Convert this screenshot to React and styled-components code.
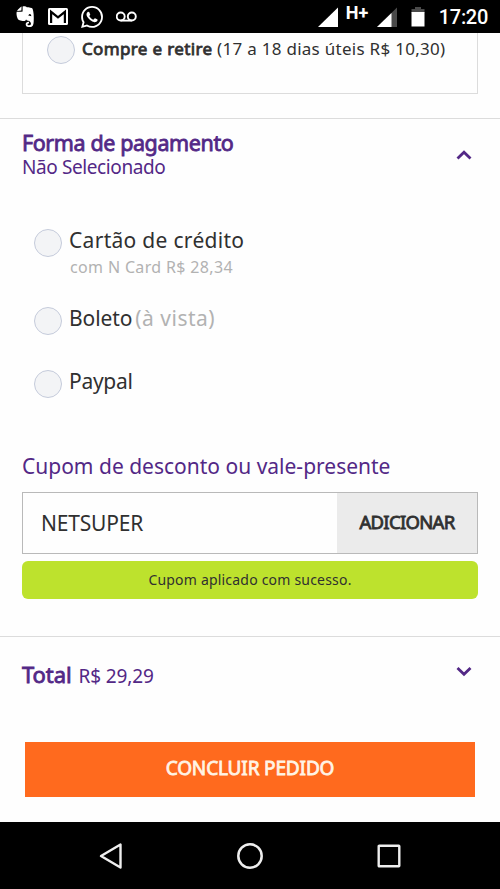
import React from "react";
import styled, { createGlobalStyle, css } from "styled-components";

const purple = "#532886";

const paymentMethods = [
  { name: "Cartão de crédito", spacing: 0.3, note: "com N Card R$ 28,34" },
  { name: "Boleto", spacing: -0.1, hint: "(à vista)" },
  { name: "Paypal", spacing: -0.3 },
];

const StatusBar = () => (
  <Status>
    <StatusGroup>
      <svg width="19" height="22" viewBox="0 0 19 22">
        <path
          fill="#fff"
          d="M5.6.6 5.4 4.6 1.2 4.9C1.7 3.9 4.5 1 5.6.6ZM6.6.5C8 0 9.8 0 10.8 1.3 13 1.4 16 1.7 16.6 2.8 17.7 6 18 11 17.7 15.5 17.500 18.500 17 21 14.200 21H12.500C10.400 21 9.700 19.700 9.700 18.300 9.700 16.400 11 15.600 13 15.700V17.400C11.900 17.300 11.500 17.700 11.600 18.400 11.700 19.100 12.300 19.200 13.200 19.200 14.700 19.200 15 18.500 14.900 17.300 14.700 15.300 12.900 14.800 11 14.400 10.500 14.200 10.200 13.900 10.100 13.200 9.500 15.200 8.200 15.200 6.500 14.900 3.400 14.500 2 14 1.300 11.700.6 9.700.3 7.500.7 5.800H5.500C6.300 5.800 6.600 5.400 6.600 4.600ZM12.500 10.100C13.300 9.600 14.400 9.700 15.300 10.300 15.200 8.800 14.600 8.100 13.800 8.100 13 8.100 12.600 8.900 12.500 10.100Z"
        />
      </svg>
      <svg width="20" height="17" viewBox="0 0 20 17">
        <rect width="20" height="17" rx="1.5" fill="#fff" />
        <path
          d="M3.1 15V3.8L10 9.3l6.9-5.5V15"
          fill="none"
          stroke="#000"
          strokeWidth="2.2"
        />
        <path d="M3.5 2h13L10 7Z" fill="#fff" />
      </svg>
      <svg width="22" height="22" viewBox="0 0 24 24">
        <path
          fill="#fff"
          d="M17.472 14.382c-.297-.149-1.758-.867-2.030-.967-.273-.099-.471-.148-.670.150-.197.297-.767.966-.940 1.164-.173.199-.347.223-.644.075-.297-.150-1.255-.463-2.390-1.475-.883-.788-1.480-1.761-1.653-2.059-.173-.297-.018-.458.130-.606.134-.133.298-.347.446-.520.149-.174.198-.298.298-.497.099-.198.050-.371-.025-.520-.075-.149-.669-1.612-.916-2.207-.242-.579-.487-.500-.669-.510-.173-.008-.371-.010-.570-.010-.198 0-.520.074-.792.372-.272.297-1.040 1.016-1.040 2.479 0 1.462 1.065 2.875 1.213 3.074.149.198 2.096 3.200 5.077 4.487.709.306 1.262.489 1.694.625.712.227 1.360.195 1.871.118.571-.085 1.758-.719 2.006-1.413.248-.694.248-1.289.173-1.413-.074-.124-.272-.198-.570-.347m-5.421 7.403h-.004a9.870 9.870 0 01-5.031-1.378l-.361-.214-3.741.982.998-3.648-.235-.374a9.860 9.860 0 01-1.510-5.260c.001-5.450 4.436-9.884 9.888-9.884 2.640 0 5.122 1.030 6.988 2.898a9.825 9.825 0 012.893 6.994c-.003 5.450-4.437 9.884-9.885 9.884m8.413-18.297A11.815 11.815 0 0012.050 0C5.495 0 .160 5.335.157 11.892c0 2.096.547 4.142 1.588 5.945L.057 24l6.305-1.654a11.882 11.882 0 005.683 1.448h.005c6.554 0 11.890-5.335 11.893-11.893a11.821 11.821 0 00-3.480-8.413z"
        />
      </svg>
      <svg width="22" height="12" viewBox="0 0 22 12">
        <g fill="none" stroke="#fff" strokeWidth="1.9">
          <circle cx="4.700" cy="5.500" r="4" />
          <circle cx="15.800" cy="5.500" r="4" />
          <path d="M4.700 9.600h11.100" />
        </g>
      </svg>
    </StatusGroup>
    <StatusGroup $right>
      <svg width="20" height="20" viewBox="0 0 20 20">
        <path d="M20 .5V20H0Z" fill="#fff" />
      </svg>
      <Network>H+</Network>
      <svg width="20" height="20" viewBox="0 0 20 20">
        <path d="M20 .5V20H0Z" fill="#4a4a4a" />
        <path d="M14.500 6v14H0Z" fill="#fff" />
      </svg>
      <Battery width="14" height="20" viewBox="0 0 14 20">
        <path d="M4 0h6v2h3.500v4H.5V2H4Z" fill="#4a4a4a" />
        <path d="M.5 5h13v14.500H.5Z" fill="#fff" />
      </Battery>
      <Clock>17:20</Clock>
    </StatusGroup>
  </Status>
);

const Chevron = ({ up }) => (
  <svg width="18" height="12" viewBox="0 0 18 12">
    <path
      d={up ? "M2.500 9.500 9 3.200 15.500 9.500" : "M2.500 3 9 9.300 15.500 3"}
      fill="none"
      stroke={purple}
      strokeWidth="2.8"
    />
  </svg>
);

const App = () => {
  return (
    <Screen>
      <GlobalStyle />
      <StatusBar />
      <Content>
        <Delivery>
          <Radio />
          <DeliveryText>
            <strong>Compre e retire</strong> <span>(17 a 18 dias úteis R$ 10,30)</span>
          </DeliveryText>
        </Delivery>
        <Payment>
          <PaymentHeader>
            <div>
              <Title>Forma de pagamento</Title>
              <Subtitle>Não Selecionado</Subtitle>
            </div>
            <Chevron up />
          </PaymentHeader>
          <Methods>
            {paymentMethods.map((method) => (
              <Method key={method.name}>
                <Radio />
                <div>
                  <MethodName>
                    <Label $spacing={method.spacing}>{method.name}</Label>
                    {method.hint && <Hint>{method.hint}</Hint>}
                  </MethodName>
                  {method.note && <Note>{method.note}</Note>}
                </div>
              </Method>
            ))}
          </Methods>
          <CouponTitle>Cupom de desconto ou vale-presente</CouponTitle>
          <Coupon>
            <CouponCode>NETSUPER</CouponCode>
            <AddButton>ADICIONAR</AddButton>
          </Coupon>
          <Success>Cupom aplicado com sucesso.</Success>
        </Payment>
        <Total>
          <TotalText>
            <strong>Total</strong>
            <span>R$ 29,29</span>
          </TotalText>
          <Chevron />
        </Total>
        <Submit>CONCLUIR PEDIDO</Submit>
      </Content>
      <NavBar>
        <svg width="24" height="28" viewBox="0 0 24 28">
          <path
            d="M21.500 2.500v23L2 14Z"
            fill="none"
            stroke="#eee"
            strokeWidth="2.4"
            strokeLinejoin="round"
          />
        </svg>
        <svg width="28" height="28" viewBox="0 0 28 28">
          <circle cx="14" cy="14" r="11.7" fill="none" stroke="#eee" strokeWidth="2.5" />
        </svg>
        <svg width="24" height="24" viewBox="0 0 24 24">
          <rect
            x="1.7"
            y="1.7"
            width="20.6"
            height="20.6"
            rx=".5"
            fill="none"
            stroke="#eee"
            strokeWidth="2.4"
          />
        </svg>
      </NavBar>
    </Screen>
  );
};

const GlobalStyle = createGlobalStyle`
  * {
    box-sizing: border-box;
  }
  body {
    margin: 0;
    background: #fff;
  }
  h2, h3, p {
    margin: 0;
    font-weight: 400;
  }
  svg {
    display: block;
    flex-shrink: 0;
  }
`;

// thickens the regular cut, so bold text keeps its narrow widths
const heavy = css`
  font-weight: 400;
  -webkit-text-stroke: 0.8px currentColor;
`;

const Screen = styled.div`
  display: flex;
  flex-direction: column;
  width: 500px;
  height: 889px;
  overflow: hidden;
  background: #fefefe;
  color: #303030;
  font-family: "Noto Sans", "Open Sans", sans-serif;
  white-space: nowrap;
`;

const Status = styled.header`
  display: flex;
  justify-content: space-between;
  height: 33px;
  flex-shrink: 0;
  padding: 0 12px 0 16px;
  background: #000;
  color: #fff;
  font-family: Roboto, sans-serif;
`;

const StatusGroup = styled.div`
  display: flex;
  align-items: ${({ $right }) => ($right ? "flex-start" : "center")};
  gap: ${({ $right }) => ($right ? "8px" : "13px")};
  padding-top: ${({ $right }) => ($right ? "7px" : "0")};
`;

const Network = styled.span`
  width: 23px;
  margin-top: -4px;
  font-size: 18px;
  font-weight: 700;
  line-height: 20px;
`;

const Battery = styled.svg`
  margin-left: 6px;
`;

const Clock = styled.span`
  margin-left: 6px;
  font-size: 20px;
  font-weight: 500;
  line-height: 21px;
  letter-spacing: -0.3px;
`;

const Content = styled.main`
  flex: 1;
`;

const Delivery = styled.section`
  display: flex;
  height: 61px;
  margin: 0 22px 24px;
  padding: 3px 0 0 24px;
  border: 1px solid #dcdcdc;
  border-width: 0 1px 1px;
`;

const Radio = styled.span`
  width: 28px;
  height: 28px;
  flex-shrink: 0;
  border: 1.5px solid #c5cbdb;
  border-radius: 50%;
  background: #f3f4f6;
`;

const DeliveryText = styled.p`
  margin: -1px 0 0 7px;
  font-size: 17px;
  line-height: 28px;
  letter-spacing: 0.28px;
  strong {
    ${heavy}
    letter-spacing: 0.35px;
  }
`;

const Payment = styled.section`
  height: 518px;
  padding: 12px 22px 0;
  border-top: 1px solid #dcdcdc;
`;

const PaymentHeader = styled.div`
  display: flex;
  align-items: center;
  justify-content: space-between;
  padding-right: 5px;
  color: ${purple};
`;

const Title = styled.h2`
  ${heavy}
  font-size: 21.5px;
  line-height: 24px;
  letter-spacing: -0.4px;
`;

const Subtitle = styled.p`
  font-size: 19px;
  line-height: 24px;
  letter-spacing: -0.4px;
`;

const Methods = styled.div`
  height: 275px;
  padding: 47px 0 0 12px;
`;

const Method = styled.div`
  display: flex;
  height: 63px;
  &:first-child {
    height: 78px;
  }
  ${Radio} {
    margin: 3px 7px 0 0;
  }
`;

const MethodName = styled.div`
  font-size: 21px;
  line-height: 28px;
`;

const Label = styled.span`
  letter-spacing: ${({ $spacing }) => $spacing}px;
`;

const Hint = styled.span`
  margin-left: 3px;
  color: #b2b2b2;
  letter-spacing: 0.5px;
`;

const Note = styled.p`
  padding: 1px 0 0 1px;
  color: #b2b2b2;
  font-size: 16px;
  line-height: 24px;
  letter-spacing: 0.35px;
`;

const CouponTitle = styled.h3`
  height: 38px;
  color: ${purple};
  font-size: 21px;
  line-height: 24px;
`;

const Coupon = styled.div`
  display: flex;
  height: 62px;
  border: 1px solid #b9b9b9;
`;

const CouponCode = styled.div`
  flex: 1;
  padding-left: 18px;
  font-size: 21px;
  line-height: 60px;
  letter-spacing: -0.2px;
`;

const AddButton = styled.button`
  width: 140px;
  padding: 0 0 4px;
  border: 0;
  background: #ebebeb;
  color: #303030;
  font: 400 18.5px "Noto Sans", sans-serif;
  letter-spacing: -0.7px;
  ${heavy}
`;

const Success = styled.p`
  height: 38px;
  margin-top: 7px;
  border-radius: 6px;
  background: #bde22d;
  font-size: 14px;
  line-height: 37px;
  letter-spacing: 0.2px;
  text-align: center;
`;

const Total = styled.section`
  display: flex;
  justify-content: space-between;
  height: 106px;
  padding: 28px 27px 0 22px;
  border-top: 1px solid #dcdcdc;
  color: ${purple};
`;

const TotalText = styled.p`
  margin-top: -2px;
  font-size: 19px;
  line-height: 22px;
  letter-spacing: -0.1px;
  strong {
    ${heavy}
    margin-right: 7px;
    font-size: 22px;
  }
`;

const Submit = styled.button`
  display: block;
  width: 450px;
  height: 55px;
  margin: 0 auto;
  padding: 0 0 4px;
  border: 0;
  background: #ff6a1e;
  color: #fff4e6;
  font: 400 19px "Noto Sans", sans-serif;
  letter-spacing: -0.15px;
  ${heavy}
`;

const NavBar = styled.nav`
  display: flex;
  align-items: center;
  justify-content: space-between;
  height: 67px;
  flex-shrink: 0;
  padding: 0 99px;
  background: #000;
`;

export default App;
